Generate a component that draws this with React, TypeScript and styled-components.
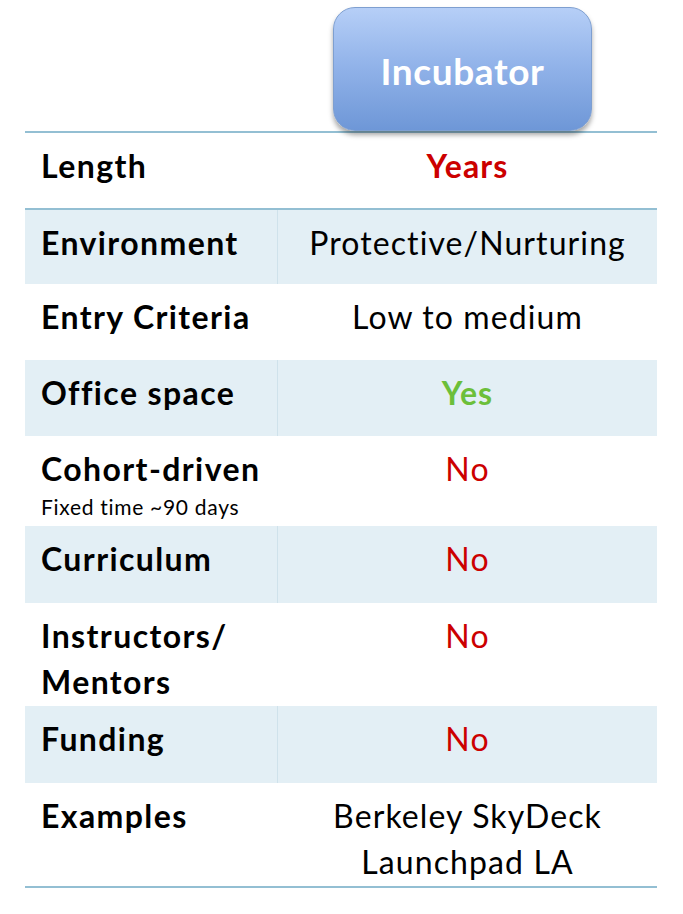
import styled, { createGlobalStyle } from "styled-components";

const GlobalStyle = createGlobalStyle`
  body {
    margin: 0;
    background: #ffffff;
    font-family: Lato, "Open Sans", sans-serif;
  }
`

const Page = styled.div`
  width: 683px;
  height: 914px;
  background: #ffffff;
  padding: 0 26px 0 25px;
  box-sizing: border-box;
`

const Header = styled.div`
  display: grid;
  grid-template-columns: 252px 1fr;
  height: 131px;
`

const TitleBox = styled.div`
  margin: 7px 0 0 56px;
  width: 259px;
  height: 124px;
  box-sizing: border-box;
  border: 1px solid #7e9fd0;
  border-radius: 22px;
  background: linear-gradient(to bottom, #b6cff7 0%, #93b4ea 45%, #6e97d7 100%);
  box-shadow: 0 4px 5px rgba(0, 0, 0, 0.35);
  display: flex;
  align-items: center;
  justify-content: center;
  color: #ffffff;
  font-weight: 700;
  font-size: 37px;
  letter-spacing: 0.6px;
  position: relative;
  z-index: 1;
  padding-top: 3px;
`

const Table = styled.div`
  border-top: 2px solid #93bfd3;
  border-bottom: 2px solid #93bfd3;
  display: flex;
  flex-direction: column;
`

const Row = styled.div<{ $h: number; $shaded?: boolean; $rule?: boolean }>`
  display: grid;
  grid-template-columns: 252px 1fr;
  height: ${p => p.$h}px;
  background: ${p => (p.$shaded ? "#e3eff5" : "#ffffff")};
  border-bottom: ${p => (p.$rule ? "2px solid #93bfd3" : "none")};
  > div + div {
    border-left: 1px solid ${p => (p.$shaded ? "#cfe2eb" : "#ffffff")};
  }
`

const Label = styled.div`
  padding: 10px 0 0 16px;
  font-weight: 700;
  font-size: 32px;
  letter-spacing: 1.4px;
  line-height: 46px;
  color: #000000;
  white-space: nowrap;
`

const Note = styled.div`
  font-weight: 400;
  font-size: 21px;
  letter-spacing: 0.7px;
  line-height: 30px;
`

const Value = styled.div<{ $tone?: "red" | "green" | "redBold" }>`
  padding-top: 10px;
  text-align: center;
  font-size: 32px;
  letter-spacing: 1.1px;
  line-height: 46px;
  white-space: nowrap;
  font-weight: ${p => (p.$tone === "redBold" || p.$tone === "green" ? 700 : 400)};
  color: ${p =>
    p.$tone === "green" ? "#6cbf3a" : p.$tone ? "#cc0000" : "#000000"};
`

export default function App() {
  return (
    <Page>
      <GlobalStyle />
      <Header>
        <div />
        <TitleBox>Incubator</TitleBox>
      </Header>
      <Table>
        <Row $h={75} $rule>
          <Label>Length</Label>
          <Value $tone="redBold">Years</Value>
        </Row>
        <Row $h={74} $shaded>
          <Label>Environment</Label>
          <Value>Protective/Nurturing</Value>
        </Row>
        <Row $h={76}>
          <Label>Entry Criteria</Label>
          <Value>Low to medium</Value>
        </Row>
        <Row $h={76} $shaded>
          <Label>Office space</Label>
          <Value $tone="green">Yes</Value>
        </Row>
        <Row $h={90}>
          <Label>
            Cohort-driven
            <Note>Fixed time ~90 days</Note>
          </Label>
          <Value $tone="red">No</Value>
        </Row>
        <Row $h={77} $shaded>
          <Label>Curriculum</Label>
          <Value $tone="red">No</Value>
        </Row>
        <Row $h={103}>
          <Label>
            Instructors/
            <br />
            Mentors
          </Label>
          <Value $tone="red">No</Value>
        </Row>
        <Row $h={77} $shaded>
          <Label>Funding</Label>
          <Value $tone="red">No</Value>
        </Row>
        <Row $h={103}>
          <Label>Examples</Label>
          <Value>
            Berkeley SkyDeck
            <br />
            Launchpad LA
          </Value>
        </Row>
      </Table>
    </Page>
  )
}
